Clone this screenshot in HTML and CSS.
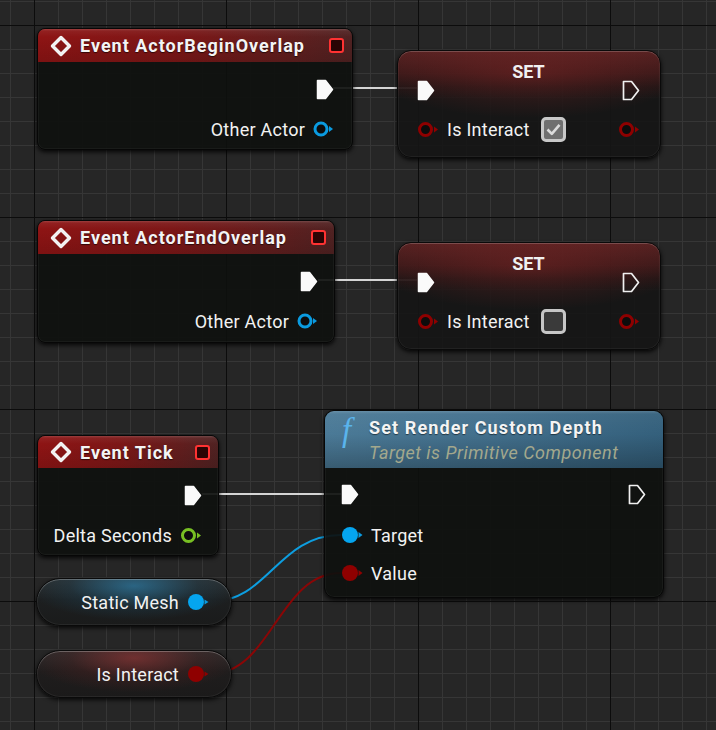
FILE: index.html
```html
<!DOCTYPE html>
<html>
<head>
<meta charset="utf-8">
<link rel="stylesheet" href="styles.css">
</head>
<body>
<div class="canvas">
  <svg class="wires" width="716" height="730" viewBox="0 0 716 730">
    <path class="w-exec" d="M333 88 L417 88"/>
    <path class="w-exec" d="M318 280 L417 280"/>
    <path class="w-exec" d="M202 494 L341 494"/>
    <path class="w-blue" d="M210 602 C 268 602, 278 535, 341 535"/>
    <path class="w-red" d="M210 674 C 272 674, 278 573, 341 573"/>
  </svg>

  <!-- Event ActorBeginOverlap -->
  <div class="node event n-begin">
    <div class="ev-hdr">
      <svg class="ev-icon" width="22" height="22" viewBox="0 0 22 22"><path d="M11 2.5 L19.5 11 L11 19.5 L2.5 11 Z"/></svg>
      <span class="ev-title">Event ActorBeginOverlap</span>
      <span class="stop"></span>
    </div>
    <div class="ev-body">
      <div class="row end"><svg class="pin-exec" width="18" height="21" viewBox="0 0 18 21"><path d="M1.5 1.5 H9.5 L16.5 10.5 L9.5 19.5 H1.5 Z"/></svg></div>
      <div class="row end"><span class="lbl">Other Actor</span><svg class="pin" width="21" height="16" viewBox="0 0 21 16"><circle class="ring blue" cx="8" cy="8" r="6"/><path class="tip blue" d="M16 5 L20 8 L16 11 Z"/></svg></div>
    </div>
  </div>

  <!-- SET 1 -->
  <div class="node set s-one">
    <div class="set-title">SET</div>
    <div class="row set-exec"><svg class="pin-exec" width="18" height="21" viewBox="0 0 18 21"><path d="M1.5 1.5 H9.5 L16.5 10.5 L9.5 19.5 H1.5 Z"/></svg><span class="grow"></span><svg class="pin-exec-o" width="18" height="21" viewBox="0 0 18 21"><path d="M1.5 1.5 H9.5 L16.5 10.5 L9.5 19.5 H1.5 Z"/></svg></div>
    <div class="row set-var">
      <svg class="pin" width="22" height="17" viewBox="0 0 22 17"><circle class="ring red" cx="8.5" cy="8.5" r="6"/><path class="tip red" d="M17 5.5 L21 8.5 L17 11.5 Z"/></svg>
      <span class="lbl">Is Interact</span>
      <span class="cb checked"><svg width="17" height="17" viewBox="0 0 17 17"><path d="M2.5 8.5 L6.8 12.8 L14.5 3.8"/></svg></span>
      <span class="grow"></span>
      <svg class="pin" width="22" height="17" viewBox="0 0 22 17"><circle class="ring red" cx="8.5" cy="8.5" r="6"/><path class="tip red" d="M17 5.5 L21 8.5 L17 11.5 Z"/></svg>
    </div>
  </div>

  <!-- Event ActorEndOverlap -->
  <div class="node event n-end">
    <div class="ev-hdr">
      <svg class="ev-icon" width="22" height="22" viewBox="0 0 22 22"><path d="M11 2.5 L19.5 11 L11 19.5 L2.5 11 Z"/></svg>
      <span class="ev-title">Event ActorEndOverlap</span>
      <span class="stop"></span>
    </div>
    <div class="ev-body">
      <div class="row end"><svg class="pin-exec" width="18" height="21" viewBox="0 0 18 21"><path d="M1.5 1.5 H9.5 L16.5 10.5 L9.5 19.5 H1.5 Z"/></svg></div>
      <div class="row end"><span class="lbl">Other Actor</span><svg class="pin" width="21" height="16" viewBox="0 0 21 16"><circle class="ring blue" cx="8" cy="8" r="6"/><path class="tip blue" d="M16 5 L20 8 L16 11 Z"/></svg></div>
    </div>
  </div>

  <!-- SET 2 -->
  <div class="node set s-two">
    <div class="set-title">SET</div>
    <div class="row set-exec"><svg class="pin-exec" width="18" height="21" viewBox="0 0 18 21"><path d="M1.5 1.5 H9.5 L16.5 10.5 L9.5 19.5 H1.5 Z"/></svg><span class="grow"></span><svg class="pin-exec-o" width="18" height="21" viewBox="0 0 18 21"><path d="M1.5 1.5 H9.5 L16.5 10.5 L9.5 19.5 H1.5 Z"/></svg></div>
    <div class="row set-var">
      <svg class="pin" width="22" height="17" viewBox="0 0 22 17"><circle class="ring red" cx="8.5" cy="8.5" r="6"/><path class="tip red" d="M17 5.5 L21 8.5 L17 11.5 Z"/></svg>
      <span class="lbl">Is Interact</span>
      <span class="cb"></span>
      <span class="grow"></span>
      <svg class="pin" width="22" height="17" viewBox="0 0 22 17"><circle class="ring red" cx="8.5" cy="8.5" r="6"/><path class="tip red" d="M17 5.5 L21 8.5 L17 11.5 Z"/></svg>
    </div>
  </div>

  <!-- Event Tick -->
  <div class="node event n-tick">
    <div class="ev-hdr">
      <svg class="ev-icon" width="22" height="22" viewBox="0 0 22 22"><path d="M11 2.5 L19.5 11 L11 19.5 L2.5 11 Z"/></svg>
      <span class="ev-title">Event Tick</span>
      <span class="stop"></span>
    </div>
    <div class="ev-body">
      <div class="row end"><svg class="pin-exec" width="18" height="21" viewBox="0 0 18 21"><path d="M1.5 1.5 H9.5 L16.5 10.5 L9.5 19.5 H1.5 Z"/></svg></div>
      <div class="row end"><span class="lbl">Delta Seconds</span><svg class="pin" width="22" height="17" viewBox="0 0 22 17"><circle class="ring green" cx="8.5" cy="8.5" r="6"/><path class="tip green" d="M17 5.5 L21 8.5 L17 11.5 Z"/></svg></div>
    </div>
  </div>

  <!-- Set Render Custom Depth -->
  <div class="node func">
    <div class="f-hdr">
      <span class="f-icon">f</span>
      <div class="f-text">
        <div class="f-title">Set Render Custom Depth</div>
        <div class="f-sub">Target is Primitive Component</div>
      </div>
    </div>
    <div class="f-body">
      <div class="row"><svg class="pin-exec" width="18" height="21" viewBox="0 0 18 21"><path d="M1.5 1.5 H9.5 L16.5 10.5 L9.5 19.5 H1.5 Z"/></svg><span class="grow"></span><svg class="pin-exec-o" width="18" height="21" viewBox="0 0 18 21"><path d="M1.5 1.5 H9.5 L16.5 10.5 L9.5 19.5 H1.5 Z"/></svg></div>
      <div class="row"><svg class="pin" width="23" height="18" viewBox="0 0 23 18"><circle class="dot blue" cx="9" cy="9" r="8"/><path class="tip blue" d="M17.5 6 L21.5 9 L17.5 12 Z"/></svg><span class="lbl">Target</span></div>
      <div class="row"><svg class="pin" width="23" height="18" viewBox="0 0 23 18"><circle class="dot red" cx="9" cy="9" r="8"/><path class="tip red" d="M17.5 6 L21.5 9 L17.5 12 Z"/></svg><span class="lbl">Value</span></div>
    </div>
  </div>

  <!-- Variable getters -->
  <div class="var v-mesh">
    <span class="lbl">Static Mesh</span>
    <svg class="pin" width="23" height="18" viewBox="0 0 23 18"><circle class="dot blue" cx="9" cy="9" r="8"/><path class="tip blue" d="M17.5 6.5 L21.5 9 L17.5 11.5 Z"/></svg>
  </div>
  <div class="var v-int">
    <span class="lbl">Is Interact</span>
    <svg class="pin" width="23" height="18" viewBox="0 0 23 18"><circle class="dot red" cx="9" cy="9" r="8"/><path class="tip red" d="M17.5 6.5 L21.5 9 L17.5 11.5 Z"/></svg>
  </div>
</div>
</body>
</html>
```

FILE: styles.css
```css
html, body {
  margin: 0;
  padding: 0;
  background: #262626;
}

.canvas {
  position: relative;
  width: 716px;
  height: 730px;
  overflow: hidden;
  font-family: Roboto, "Noto Sans", sans-serif;
  color: #f0f0f0;
  background-color: #262626;
  background-image:
    linear-gradient(to right, #0c0c0c 1px, transparent 1px),
    linear-gradient(to bottom, #0c0c0c 1px, transparent 1px),
    linear-gradient(to right, #363636 1px, transparent 1px),
    linear-gradient(to bottom, #363636 1px, transparent 1px);
  background-size: 192px 192px, 192px 192px, 24px 24px, 24px 24px;
  background-position: 34px 25px, 34px 25px, 10px 1px, 10px 1px;
}

.wires {
  position: absolute;
  left: 0;
  top: 0;
}
.wires path { fill: none; stroke-width: 2; }
.w-exec { stroke: #d4d4d4; }
.w-blue { stroke: #0d9ee0; }
.w-red { stroke: #8a0606; }

/* generic node */
.node {
  position: absolute;
  box-sizing: border-box;
  background: rgba(14, 16, 14, 0.92);
  border: 1px solid #070707;
  box-shadow: 0 2px 4px rgba(0, 0, 0, 0.85), inset 0 0 0 1px rgba(255, 255, 255, 0.04);
  display: flex;
  flex-direction: column;
}

.row {
  display: flex;
  align-items: center;
}
.row.end { justify-content: flex-end; }
.grow { flex: 1; }
.pin { flex: none; }
.lbl {
  font-size: 18px;
  letter-spacing: 0.25px;
  color: #f2f2f2;
  white-space: nowrap;
}

.pin-exec { flex: none; }
.pin-exec path {
  fill: #fafafa;
  stroke: #fafafa;
  stroke-width: 1.5;
  stroke-linejoin: round;
}
.pin-exec-o { flex: none; }
.pin-exec-o path {
  fill: none;
  stroke: #f0f0f0;
  stroke-width: 1.7;
  stroke-linejoin: round;
}
.ring { fill: #0c0c0c; stroke-width: 3; }
.ring.blue { stroke: #0a9be0; }
.ring.red { stroke: #8e0000; }
.ring.green { stroke: #78c023; }
.dot.blue { fill: #05a5ef; }
.dot.red { fill: #8f0000; }
.tip.blue { fill: #0a9be0; }
.tip.red { fill: #900000; }
.tip.green { fill: #78c023; }

/* event nodes */
.event { border-radius: 8px; overflow: hidden; }
.n-begin { left: 37px; top: 28px; width: 316px; height: 122px; }
.n-end { left: 37px; top: 220px; width: 298px; height: 123px; }
.n-tick { left: 37px; top: 435px; width: 182px; height: 121px; }

.ev-hdr {
  height: 33px;
  display: flex;
  align-items: center;
  padding: 0 8px 0 12px;
  background:
    linear-gradient(to bottom, rgba(255, 255, 255, 0.18) 0, rgba(255, 255, 255, 0.05) 2px, rgba(0, 0, 0, 0) 8px, rgba(0, 0, 0, 0.12) 100%),
    linear-gradient(to right, #8e1414 0%, #7c1717 45%, #611e1e 80%, #502222 100%);
}
.ev-icon { flex: none; }
.ev-icon path {
  fill: none;
  stroke: #f2f2f2;
  stroke-width: 3.4;
  stroke-linejoin: round;
}
.ev-title {
  flex: 1;
  margin-left: 8px;
  font-size: 18px;
  font-weight: bold;
  letter-spacing: 1px;
  color: #f4f4f4;
  white-space: nowrap;
  text-shadow: 0 1px 1px rgba(0, 0, 0, 0.6);
}
.stop {
  flex: none;
  width: 11px;
  height: 11px;
  border: 2px solid #ff3232;
  border-radius: 3px;
  background: #2a0404;
}

.ev-body {
  flex: 1;
  padding: 7px 18px 0 0;
}
.n-end .ev-body { padding-right: 16px; }
.n-tick .ev-body { padding-right: 16px; }
.ev-body .row { height: 40px; }
.ev-body .lbl { margin-right: 8px; }

/* SET nodes */
.set {
  border-radius: 14px;
  width: 264px;
  height: 108px;
  padding: 0 20px 0 19px;
  background:
    radial-gradient(ellipse 60% 45px at 50% 22px, rgba(150, 40, 40, 0.35), rgba(0, 0, 0, 0) 100%),
    linear-gradient(to bottom, rgba(150, 45, 45, 0.5) 0, rgba(110, 30, 30, 0.42) 22px, rgba(80, 20, 20, 0.2) 36px, rgba(0, 0, 0, 0) 48px),
    rgba(22, 22, 22, 0.93);
  border-color: #0a0a0a;
  box-shadow: 0 2px 4px rgba(0, 0, 0, 0.85), inset 0 1px 0 rgba(255, 255, 255, 0.15), inset 0 0 0 1px rgba(255, 255, 255, 0.05);
}
.s-one { left: 397px; top: 50px; }
.s-two { left: 397px; top: 242px; }
.set-title {
  text-align: center;
  font-size: 18px;
  font-weight: bold;
  color: #f0f0f0;
  margin-top: 10px;
  line-height: 22px;
}
.set-exec { height: 15px; }
.set-var { height: 40px; margin-top: 11px; }
.set-var .lbl { margin-left: 8px; }

.cb {
  flex: none;
  box-sizing: border-box;
  width: 25px;
  height: 25px;
  margin-left: 11px;
  border: 3px solid #c6c6c6;
  border-radius: 5px;
  background: #3a3a3a;
  display: flex;
  align-items: center;
  justify-content: center;
}
.cb.checked { background: #707070; border-color: #c8c8c8; }
.cb svg path {
  fill: none;
  stroke: #dcdcdc;
  stroke-width: 2.6;
  stroke-linejoin: round;
}

/* function node */
.func {
  left: 324px;
  top: 410px;
  width: 340px;
  height: 188px;
  border-radius: 10px;
  overflow: hidden;
}
.f-hdr {
  height: 57px;
  box-sizing: border-box;
  display: flex;
  align-items: flex-start;
  padding: 4px 0 0 17px;
  background:
    linear-gradient(to bottom, rgba(255, 255, 255, 0.16) 0, rgba(255, 255, 255, 0.04) 3px, rgba(0, 0, 0, 0) 40%, rgba(0, 0, 0, 0.25) 100%),
    linear-gradient(to right, #4b7a97 0%, #426f8c 50%, #34607c 100%);
}
.f-icon {
  font-family: "Liberation Serif", "DejaVu Serif", serif;
  font-style: italic;
  font-size: 33px;
  line-height: 30px;
  color: #5ab4ec;
  width: 27px;
}
.f-text { display: flex; flex-direction: column; }
.f-title {
  font-size: 18px;
  font-weight: bold;
  letter-spacing: 1.1px;
  color: #f4f4f4;
  line-height: 25px;
  white-space: nowrap;
  text-shadow: 0 1px 1px rgba(0, 0, 0, 0.5);
}
.f-sub {
  font-size: 18px;
  font-style: italic;
  letter-spacing: 0.5px;
  color: #a3a88d;
  line-height: 25px;
  white-space: nowrap;
}
.f-body {
  flex: 1;
  padding: 13px 17px 0 16px;
}
.f-body .row { height: 38px; }
.f-body .row:first-child { height: 26px; margin-bottom: 9px; }
.f-body .lbl { margin-left: 7px; }

/* variable getter pills */
.var {
  position: absolute;
  left: 36px;
  width: 196px;
  height: 48px;
  box-sizing: border-box;
  border-radius: 24px;
  border: 1px solid #0a0a0a;
  display: flex;
  align-items: center;
  justify-content: flex-end;
  padding-right: 21px;
  box-shadow: 0 2px 4px rgba(0, 0, 0, 0.8), inset 0 1px 0 rgba(255, 255, 255, 0.22), inset 0 0 0 1px rgba(255, 255, 255, 0.06);
}
.var .lbl { margin-right: 8px; }
.v-mesh {
  top: 578px;
  background:
    radial-gradient(ellipse 55% 75% at 50% 15%, rgba(45, 140, 190, 0.6), rgba(30, 90, 120, 0.22) 60%, rgba(0, 0, 0, 0) 100%),
    linear-gradient(to bottom, #2c2e2f 0, #1d1f20 45%, #1a1b1b 100%);
}
.v-int {
  top: 650px;
  background:
    radial-gradient(ellipse 55% 75% at 50% 15%, rgba(170, 55, 55, 0.55), rgba(110, 35, 35, 0.22) 60%, rgba(0, 0, 0, 0) 100%),
    linear-gradient(to bottom, #2c2c2c 0, #1f1d1d 45%, #1b1a1a 100%);
}
```
